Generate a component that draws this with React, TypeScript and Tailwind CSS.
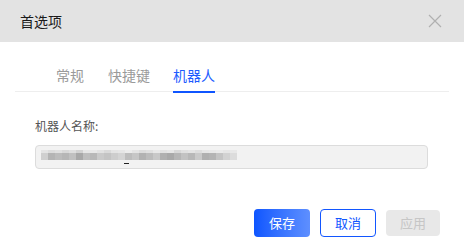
import React from "react";

const top = ["#e4e4e4","#dcdcdc","#e0e0e0","#d8d8d8","#dedede","#d2d2d2","#e6e6e6","#e8e8e8","#e2e2e2","#dadada","#e4e4e4","#e6e6e6","#ececec","#e4e4e4","#dcdcdc","#e0e0e0","#e8e8e8","#e2e2e2","#e6e6e6","#d8d8d8","#e0e0e0","#e4e4e4","#dedede","#e6e6e6","#e8e8e8","#eaeaea","#e6e6e6","#e8e8e8"];
const mid = ["#cfcfcf","#b4b4b4","#bcbcbc","#b6b6b6","#c0c0c0","#a8a8a8","#bebebe","#b8b8b8","#cacaca","#c4c4c4","#cdcdcd","#d4d4d4","#bdbdbd","#c6c6c6","#b2b2b2","#bcbcbc","#c8c8c8","#b0b0b0","#a9a9a9","#b6b6b6","#c2c2c2","#b8b8b8","#cacaca","#b0b0b0","#b4b4b4","#c4c4c4","#d2d2d2","#dcdcdc"];

export default function App() {
  return (
    <div
      className="w-[464px] h-[248px] bg-white flex flex-col overflow-hidden"
      style={{ fontFamily: '"Noto Sans CJK SC", "Noto Sans", sans-serif' }}
    >
      <div className="h-[42px] bg-[#e3e3e3] flex items-center justify-between pl-5 pr-[22px] shrink-0">
        <span className="text-[14px] text-[#1a1a1a]">首选项</span>
        <svg width="14" height="14" viewBox="0 0 14 14">
          <path d="M1 1 L13 13 M13 1 L1 13" stroke="#b0b0b0" strokeWidth="1.2" fill="none" />
        </svg>
      </div>
      <div className="mx-[15px] mt-[23px] border-b border-[#eeeeee] flex pl-[41px] gap-[24px] h-[27px]">
        <div className="text-[14px] text-[#9a9a9a] leading-[20px]">常规</div>
        <div className="text-[14px] text-[#9a9a9a] leading-[20px]">快捷键</div>
        <div className="text-[14px] text-[#1d5cff] leading-[20px] border-b-2 border-[#0f55ff] h-[28px] -ml-px">机器人</div>
      </div>
      <div className="pl-[35px] pt-[26px] text-[12px] text-[#555] leading-[16px]">机器人名称:</div>
      <div className="ml-[35px] mt-[11px] w-[393px] h-[24px] rounded-[4px] border border-[#dcdcdc] bg-[#f2f2f2] relative">
        <div className="absolute left-[5px] top-[4px] flex">
          {top.map((c, i) => (
            <div key={i} className="w-[7px] h-[3px]" style={{ background: c }} />
          ))}
        </div>
        <div className="absolute left-[5px] top-[7px] flex">
          {mid.map((c, i) => (
            <div key={i} className="w-[7px] h-[7px]" style={{ background: c }} />
          ))}
        </div>
        <div className="absolute left-[88px] top-[17px] w-[5px] h-[1px] bg-[#222]" />
      </div>
      <div className="flex justify-end gap-[10px] pr-[24px] mt-[40px] items-center">
        <button className="w-[56px] h-[28px] rounded-[4px] bg-gradient-to-r from-[#0d55ff] to-[#5e8fff] text-white text-[13px]">保存</button>
        <button className="w-[56px] h-[28px] rounded-[4px] border border-[#1256ff] text-[#1256ff] text-[13px] bg-white">取消</button>
        <button className="w-[54px] h-[26px] rounded-[4px] bg-[#e8e8e8] text-[#c6c6c6] text-[13px]">应用</button>
      </div>
    </div>
  );
}
